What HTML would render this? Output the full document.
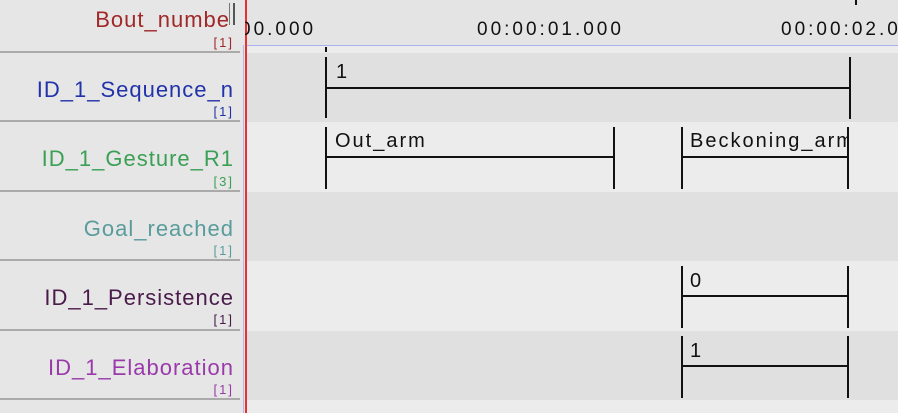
<!DOCTYPE html>
<html><head><style>
body{margin:0;width:898px;height:413px;overflow:hidden;background:#e6e6e6;font-family:"Liberation Sans",sans-serif;position:relative}
.a{position:absolute}
.lbl{position:absolute;right:664px;font-size:22px;letter-spacing:1px;white-space:nowrap}
.cnt{position:absolute;right:664px;font-size:13px;letter-spacing:2px}
.v{position:absolute;width:2px;background:#111}
.h{position:absolute;height:2px;background:#111}
.t{position:absolute;font-size:20px;letter-spacing:2px;color:#111}
.tl{position:absolute;font-size:19px;letter-spacing:3px;color:#111;white-space:nowrap}
</style></head><body>
<div class="a" style="left:0;top:0;width:243px;height:413px;background:#e6e6e6"></div>
<div class="a" style="left:0;top:51px;width:240px;height:2px;background:#aaa"></div>
<div class="a" style="left:0;top:120px;width:240px;height:2px;background:#aaa"></div>
<div class="a" style="left:0;top:190px;width:240px;height:2px;background:#aaa"></div>
<div class="a" style="left:0;top:259px;width:240px;height:2px;background:#aaa"></div>
<div class="a" style="left:0;top:329px;width:240px;height:2px;background:#aaa"></div>
<div class="a" style="left:0;top:398px;width:240px;height:2px;background:#aaa"></div>
<div class="a" style="left:243px;top:0;width:1px;height:413px;background:#b8b8e8"></div>
<div class="a" style="left:245px;top:0;width:2px;height:413px;background:#e83030"></div>
<div class="a" style="left:247px;top:0;width:651px;height:45px;background:#e4e4e4"></div>
<div class="a" style="left:247px;top:45px;width:651px;height:1px;background:#aab0f0"></div>
<div class="a" style="left:247px;top:46px;width:651px;height:7px;background:#ececec"></div>
<div class="a" style="left:247px;top:53px;width:651px;height:69px;background:#e0e0e0"></div>
<div class="a" style="left:247px;top:122px;width:651px;height:70px;background:#ececec"></div>
<div class="a" style="left:247px;top:192px;width:651px;height:69px;background:#e0e0e0"></div>
<div class="a" style="left:247px;top:261px;width:651px;height:70px;background:#ececec"></div>
<div class="a" style="left:247px;top:331px;width:651px;height:69px;background:#e0e0e0"></div>
<div class="a" style="left:247px;top:400px;width:651px;height:13px;background:#ececec"></div>
<div class="tl" style="left:240px;top:19px">00.000</div>
<div class="tl" style="left:477px;top:19px">00:00:01.000</div>
<div class="tl" style="left:781px;top:19px">00:00:02.0</div>
<div class="v" style="left:325px;top:47px;height:5px"></div>
<div class="v" style="left:855px;top:0;height:5px"></div>
<div class="a" style="left:0;top:0;width:245px;height:45px;background:#e6e6e6"></div>
<div class="a" style="left:233px;top:3px;width:2px;height:22px;background:#555"></div>
<div class="a" style="left:229px;top:3px;width:1px;height:22px;background:#777"></div>
<div class="lbl" style="top:7px;color:#a02828;right:668px">Bout_numbe</div><div class="cnt" style="top:35px;color:#a02828">[1]</div>
<div class="lbl" style="top:77px;color:#2233aa">ID_1_Sequence_n</div><div class="cnt" style="top:104px;color:#2233aa">[1]</div>
<div class="lbl" style="top:146px;color:#3aa055">ID_1_Gesture_R1</div><div class="cnt" style="top:174px;color:#3aa055">[3]</div>
<div class="lbl" style="top:216px;color:#5a9c9c">Goal_reached</div><div class="cnt" style="top:243px;color:#5a9c9c">[1]</div>
<div class="lbl" style="top:285px;color:#4a1a4a">ID_1_Persistence</div><div class="cnt" style="top:312px;color:#4a1a4a">[1]</div>
<div class="lbl" style="top:355px;color:#9a3aaa">ID_1_Elaboration</div><div class="cnt" style="top:382px;color:#9a3aaa">[1]</div>
<div class="v" style="left:325px;top:57px;height:61px"></div>
<div class="v" style="left:849px;top:57px;height:62px"></div>
<div class="h" style="left:325px;top:87px;width:526px"></div>
<div class="t" style="left:336px;top:61px">1</div>
<div class="v" style="left:325px;top:127px;height:62px"></div>
<div class="v" style="left:613px;top:127px;height:62px"></div>
<div class="h" style="left:325px;top:156px;width:290px"></div>
<div class="t" style="left:335px;top:130px">Out_arm</div>
<div class="v" style="left:681px;top:127px;height:62px"></div>
<div class="v" style="left:847px;top:127px;height:62px"></div>
<div class="h" style="left:681px;top:156px;width:168px"></div>
<div class="t" style="left:690px;top:130px;width:157px;overflow:hidden;white-space:nowrap">Beckoning_arm</div>
<div class="v" style="left:681px;top:266px;height:62px"></div>
<div class="v" style="left:847px;top:266px;height:62px"></div>
<div class="h" style="left:681px;top:295px;width:168px"></div>
<div class="t" style="left:690px;top:270px">0</div>
<div class="v" style="left:681px;top:336px;height:62px"></div>
<div class="v" style="left:847px;top:336px;height:62px"></div>
<div class="h" style="left:681px;top:365px;width:168px"></div>
<div class="t" style="left:690px;top:340px">1</div>
</body></html>
